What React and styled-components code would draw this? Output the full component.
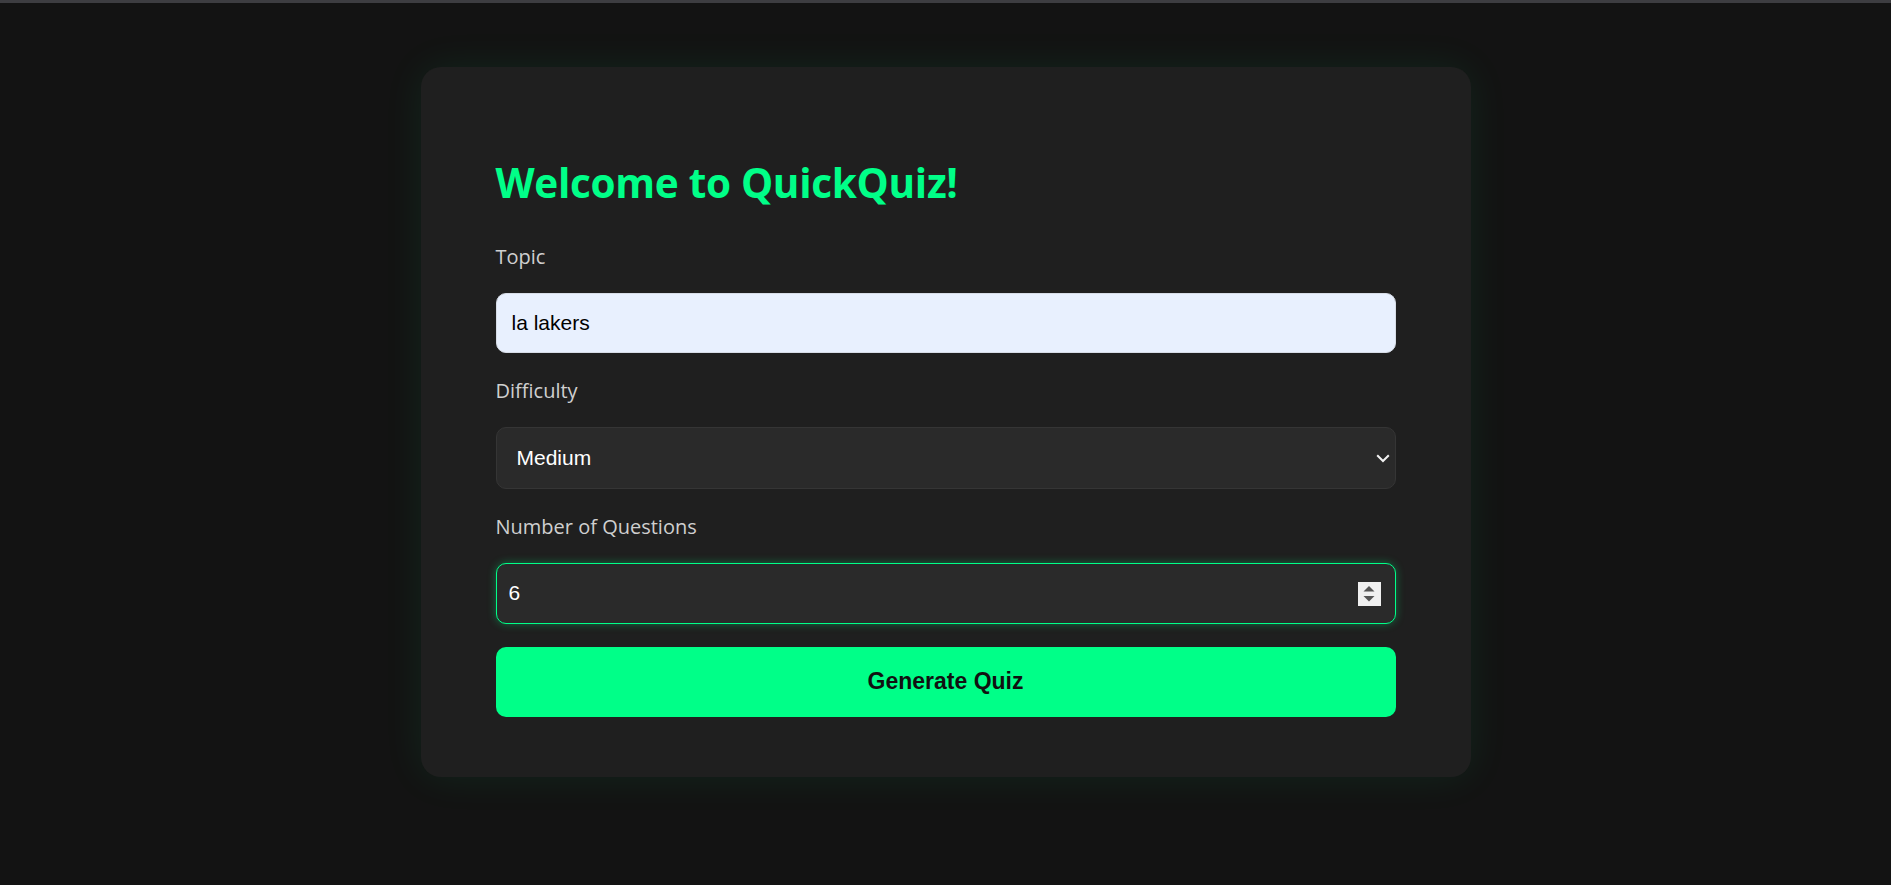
import React, { useState } from "react";
import styled, { createGlobalStyle } from "styled-components";

const GlobalStyle = createGlobalStyle`
  body {
    margin: 0;
    background: #131313;
    font-family: "Open Sans", "Noto Sans", sans-serif;
  }
  * { box-sizing: border-box; }
`;

function App() {
  const [topic, setTopic] = useState("la lakers");
  const [difficulty, setDifficulty] = useState("medium");
  const [count, setCount] = useState("6");

  return (
    <>
      <GlobalStyle />
      <StPage>
        <StTopBar />
        <StCard>
          <StTitle>Welcome to QuickQuiz!</StTitle>

          <StField>
            <StLabel htmlFor="topic">Topic</StLabel>
            <StInput
              id="topic"
              $variant="autofill"
              value={topic}
              onChange={(e) => setTopic(e.target.value)}
            />
          </StField>

          <StField>
            <StLabel htmlFor="difficulty">Difficulty</StLabel>
            <StControlWrap>
              <StSelect
                id="difficulty"
                value={difficulty}
                onChange={(e) => setDifficulty(e.target.value)}
              >
                <option value="easy">Easy</option>
                <option value="medium">Medium</option>
                <option value="hard">Hard</option>
              </StSelect>
              <StChevron viewBox="0 0 14 9" fill="none">
                <path d="M1.2 1.2 L7 7 L12.8 1.2" stroke="#f2f2f2" strokeWidth="2" />
              </StChevron>
            </StControlWrap>
          </StField>

          <StField>
            <StLabel htmlFor="count">Number of Questions</StLabel>
            <StControlWrap>
              <StInput
                id="count"
                type="number"
                $variant="focused"
                value={count}
                onChange={(e) => setCount(e.target.value)}
              />
              <StSpinner>
                <svg width="12" height="18" viewBox="0 0 12 18">
                  <path d="M6 1 L11.5 6.5 L0.5 6.5 Z" fill="#555" />
                  <path d="M0.5 11 L11.5 11 L6 16.5 Z" fill="#555" />
                </svg>
              </StSpinner>
            </StControlWrap>
          </StField>

          <StButton>Generate Quiz</StButton>
        </StCard>
      </StPage>
    </>
  );
}

export default App;

const StPage = styled.div`
  min-height: 100vh;
  display: flex;
  flex-direction: column;
  align-items: center;
`;

const StTopBar = styled.div`
  align-self: stretch;
  height: 3px;
  background: #3d3d41;
`;

const StCard = styled.div`
  width: 1050px;
  margin-top: 64px;
  padding: 92px 75px 60px;
  background: #1f1f1f;
  border-radius: 20px;
  box-shadow: 0 0 40px rgba(0, 255, 136, 0.08);
  display: flex;
  flex-direction: column;
`;

const StTitle = styled.h1`
  margin: 0 0 34px;
  color: #00ff88;
  font-family: "Open Sans", sans-serif;
  font-weight: 700;
  font-size: 40.5px;
  line-height: 1.2;
  letter-spacing: -0.3px;
`;

const StField = styled.div`
  display: flex;
  flex-direction: column;
  margin-bottom: 23px;
`;

const StLabel = styled.label`
  color: #cfcfcf;
  font-size: 20px;
  line-height: 30px;
  margin-bottom: 21px;
`;

const StInput = styled.input`
  width: 100%;
  height: ${(p) => (p.$variant === "autofill" ? "60px" : "61px")};
  padding: 0 ${(p) => (p.$variant === "focused" ? "12px" : "15px")};
  border-radius: 10px;
  font-family: "Liberation Sans", Arial, sans-serif;
  font-size: 21px;
  outline: none;
  background: ${(p) => (p.$variant === "autofill" ? "#e8f0fe" : "#2a2a2a")};
  color: ${(p) => (p.$variant === "autofill" ? "#000" : "#fff")};
  border: 1px solid ${(p) => (p.$variant === "focused" ? "#00ff88" : "#d6dce6")};
  box-shadow: ${(p) => (p.$variant === "focused" ? "0 0 8px rgba(0, 255, 136, 0.35)" : "none")};

  &::-webkit-inner-spin-button,
  &::-webkit-outer-spin-button {
    -webkit-appearance: none;
    margin: 0;
  }
`;

const StControlWrap = styled.div`
  position: relative;
`;

const StSelect = styled.select`
  width: 100%;
  height: 62px;
  padding: 0 20px;
  appearance: none;
  -webkit-appearance: none;
  background: #2a2a2a;
  color: #fff;
  border: 1px solid #353535;
  border-radius: 10px;
  font-family: "Liberation Sans", Arial, sans-serif;
  font-size: 21px;
  outline: none;
`;

const StChevron = styled.svg`
  position: absolute;
  right: 6px;
  top: 27px;
  width: 14px;
  height: 9px;
  pointer-events: none;
`;

const StSpinner = styled.div`
  position: absolute;
  right: 15px;
  top: 19px;
  width: 23px;
  height: 24px;
  background: #f0f0f0;
  display: flex;
  align-items: center;
  justify-content: center;
  pointer-events: none;
`;

const StButton = styled.button`
  height: 70px;
  border: none;
  border-radius: 10px;
  background: #00ff88;
  color: #111;
  font-family: "Liberation Sans", Arial, sans-serif;
  font-weight: 700;
  font-size: 23px;
  cursor: pointer;
`;
